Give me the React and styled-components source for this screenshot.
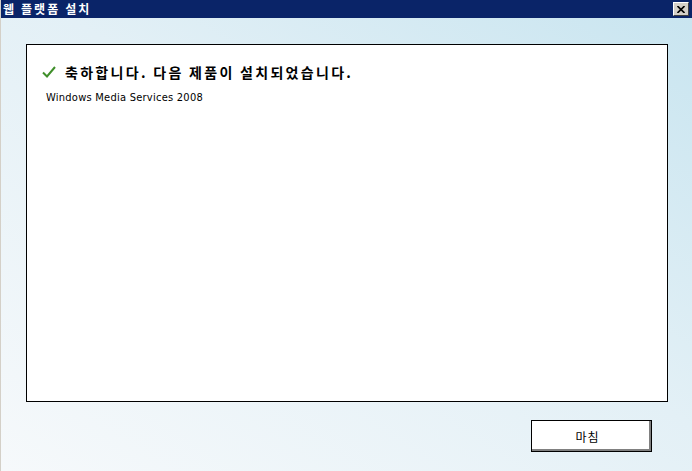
import React from "react";
import styled, { createGlobalStyle } from "styled-components";

const Global = createGlobalStyle`
  html, body { margin: 0; padding: 0; }
  body { font-family: "Noto Sans CJK KR", "Noto Sans", sans-serif; }
`;

const Window = styled.div`
  width: 692px;
  height: 471px;
  display: flex;
  flex-direction: column;
  overflow: hidden;
  box-sizing: border-box;
  border-left: 1px solid #d4d0c8;
`;

const TitleBar = styled.div`
  height: 18px;
  flex: none;
  background: #0a2468;
  display: flex;
  align-items: center;
  justify-content: space-between;
  padding: 0 3px 0 2px;
`;

const Title = styled.span`
  color: #fff;
  font-family: "Noto Sans CJK KR", sans-serif;
  font-weight: 700;
  font-size: 12px;
  letter-spacing: 2.1px;
  line-height: 18px;
`;

const CloseButton = styled.div`
  width: 16px;
  height: 14px;
  box-sizing: border-box;
  background: #d4d0c8;
  border-top: 1px solid #fff;
  border-left: 1px solid #fff;
  border-right: 1px solid #404040;
  border-bottom: 1px solid #404040;
  display: flex;
  align-items: center;
  justify-content: center;
`;

const Body = styled.div`
  flex: 1;
  display: flex;
  flex-direction: column;
  background: linear-gradient(to bottom left, #c9e5f0 0%, #e3f0f6 45%, #f6f9fb 100%);
  padding: 26px 24px 0 25px;
`;

const ContentBox = styled.div`
  width: 642px;
  height: 358px;
  box-sizing: border-box;
  background: #fff;
  border: 1px solid #000;
  padding: 16px 0 0 15px;
  display: flex;
  flex-direction: column;
`;

const HeadingRow = styled.div`
  display: flex;
  align-items: center;
  gap: 9px;
  height: 22px;
`;

const Heading = styled.h1`
  margin: 0;
  font-family: "Noto Sans CJK KR", sans-serif;
  font-weight: 700;
  font-size: 14px;
  letter-spacing: 2.3px;
  color: #000;
`;

const Product = styled.div`
  margin: 8px 0 0 4px;
  font-family: "DejaVu Sans Condensed", "DejaVu Sans", sans-serif;
  font-size: 11px;
  letter-spacing: 0.25px;
  color: #000;
`;

const Footer = styled.div`
  display: flex;
  justify-content: flex-end;
  padding: 18px 16px 0 0;
`;

const Button = styled.button`
  width: 121px;
  height: 32px;
  box-sizing: border-box;
  background: #fff;
  border: 1px solid #000;
  box-shadow: inset -2px -2px 0 #808080, inset 1px 1px 0 #fff;
  font-family: "Noto Sans CJK KR", sans-serif;
  font-size: 12px;
  letter-spacing: 1px;
  color: #000;
  padding: 0 8px 0 0;
  cursor: default;
`;

function CheckIcon() {
  return (
    <svg width="14" height="12" viewBox="0 0 14 12">
      <path d="M1 6.5 L5 10.5 L13 1" fill="none" stroke="#3f8f2a" strokeWidth="2" />
    </svg>
  );
}

export default function App() {
  return (
    <Window>
      <Global />
      <TitleBar>
        <Title>웹 플랫폼 설치</Title>
        <CloseButton>
          <svg width="8" height="7" viewBox="0 0 8 7">
            <path d="M0.5 0 L7.5 7 M7.5 0 L0.5 7" stroke="#000" strokeWidth="1.6" />
          </svg>
        </CloseButton>
      </TitleBar>
      <Body>
        <ContentBox>
          <HeadingRow>
            <CheckIcon />
            <Heading>축하합니다. 다음 제품이 설치되었습니다.</Heading>
          </HeadingRow>
          <Product>Windows Media Services 2008</Product>
        </ContentBox>
        <Footer>
          <Button>마침</Button>
        </Footer>
      </Body>
    </Window>
  );
}
